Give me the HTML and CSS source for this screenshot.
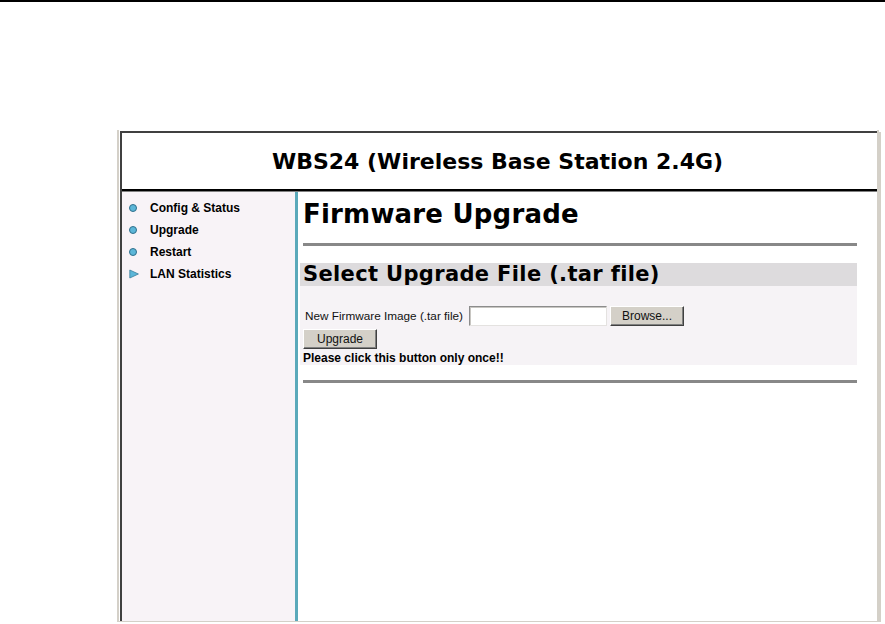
FILE: index.html
```html
<!DOCTYPE html>
<html>
<head>
<meta charset="utf-8">
<title>WBS24</title>
<link rel="stylesheet" href="styles.css">
</head>
<body>
<div class="topline"></div>
<div class="frame">
  <div class="win">
    <div class="header"><div class="title">WBS24 (Wireless Base Station 2.4G)</div></div>
    <div class="main">
      <nav class="side">
        <div class="item"><svg class="bul" viewBox="0 0 10 10"><circle cx="4" cy="5" r="3.5" fill="#5cb6d8" stroke="#2f6f8c" stroke-width="1"/></svg><span>Config &amp; Status</span></div>
        <div class="item"><svg class="bul" viewBox="0 0 10 10"><circle cx="4" cy="5" r="3.5" fill="#5cb6d8" stroke="#2f6f8c" stroke-width="1"/></svg><span>Upgrade</span></div>
        <div class="item"><svg class="bul" viewBox="0 0 10 10"><circle cx="4" cy="5" r="3.5" fill="#5cb6d8" stroke="#2f6f8c" stroke-width="1"/></svg><span>Restart</span></div>
        <div class="item"><svg class="bul" viewBox="0 0 10 10"><polygon points="0.8,1 9.4,5 0.8,9" fill="#5cb6d8" stroke="#3a7f9c" stroke-width="0.8"/></svg><span>LAN Statistics</span></div>
      </nav>
      <div class="content">
        <h1 class="pagetitle">Firmware Upgrade</h1>
        <div class="rule"></div>
        <div class="section">
          <div class="bar">Select Upgrade File (.tar file)</div>
          <div class="sbody">
            <div class="filerow"><span class="label">New Firmware Image (.tar file)</span><span class="input"></span><span class="btn">Browse...</span></div>
            <div class="btnrow"><span class="btn">Upgrade</span></div>
            <div class="note">Please click this button only once!!</div>
          </div>
        </div>
        <div class="rule rule2"></div>
      </div>
    </div>
  </div>
</div>
</body>
</html>
```
FILE: styles.css
```css
html, body {
  margin: 0;
  padding: 0;
  background: #fff;
  overflow: hidden;
}
body {
  font-family: "Liberation Sans", Arial, sans-serif;
  color: #000;
}
.topline {
  height: 2px;
  background: #000;
}
.frame {
  margin: 128px 0 0 117px;
  width: 762px;
  height: 492px;
  box-sizing: border-box;
  border-left: 2px solid #d4d0c8;
  border-right: 2px solid #d4d0c8;
  border-bottom: 1px solid #d4d0c8;
  padding: 1px 0 0 1px;
  box-shadow: 2px 2px 0 #d4d0c8;
  display: flex;
}
.win {
  flex: 1;
  display: flex;
  flex-direction: column;
  border-top: 2px solid #404040;
  border-left: 2px solid #404040;
  min-width: 0;
}
.header {
  height: 56px;
  flex: none;
  border-bottom: 2px solid #000;
  display: flex;
  align-items: center;
  justify-content: center;
  background: #fff;
}
.title {
  font-family: "DejaVu Sans", Verdana, sans-serif;
  font-weight: bold;
  font-size: 22px;
  margin-right: 4px;
}
.main {
  flex: 1;
  display: flex;
  border-top: 1px solid #808080;
  min-height: 0;
}
.side {
  width: 173px;
  flex: none;
  background: #f8f3f7;
  border-right: 3px solid #5ba9ba;
  padding-top: 5px;
}
.item {
  display: flex;
  align-items: center;
  height: 22px;
  padding-left: 7px;
  font-size: 12px;
  font-weight: bold;
}
.bul {
  width: 10px;
  height: 10px;
  margin-right: 11px;
  flex: none;
}
.content {
  flex: 1;
  padding: 7px 20px 0 2px;
  background: #fff;
}
.pagetitle {
  margin: 0;
  padding-left: 3px;
  font-family: "DejaVu Sans", Verdana, sans-serif;
  font-weight: bold;
  font-size: 26px;
  line-height: 30px;
  letter-spacing: 0.2px;
}
.rule {
  margin: 14px 0 0 3px;
  height: 3px;
  background: #888;
}
.rule2 {
  margin-top: 15px;
}
.section {
  margin-top: 17px;
}
.bar {
  height: 23px;
  line-height: 23px;
  background: #dddbdd;
  padding-left: 3px;
  font-family: "DejaVu Sans", Verdana, sans-serif;
  font-weight: bold;
  font-size: 21px;
  letter-spacing: 0.35px;
  white-space: nowrap;
}
.sbody {
  background: #f6f3f6;
  padding-top: 20px;
}
.filerow {
  display: flex;
  align-items: center;
  height: 20px;
  padding-left: 5px;
}
.label {
  font-size: 11.75px;
  margin-right: 6px;
  color: #111;
  position: relative;
  top: -1px;
}
.input {
  width: 138px;
  height: 20px;
  box-sizing: border-box;
  background: #fff;
  border-top: 1px solid #8c8c8c;
  border-left: 1px solid #8c8c8c;
  border-right: 1px solid #e4e2e0;
  border-bottom: 1px solid #e4e2e0;
  box-shadow: inset 1px 1px 0 #c8c6c2;
  margin-right: 3px;
}
.btn {
  display: inline-flex;
  align-items: center;
  justify-content: center;
  width: 74px;
  height: 20px;
  box-sizing: border-box;
  background: #d4d0c8;
  border-top: 1px solid #fff;
  border-left: 1px solid #fff;
  border-right: 1px solid #404040;
  border-bottom: 1px solid #404040;
  box-shadow: inset -1px -1px 0 #808080;
  font-size: 12px;
  color: #111;
}
.btnrow {
  margin-top: 3px;
  padding-left: 3px;
  height: 20px;
}
.note {
  margin-top: 2px;
  padding-left: 3px;
  font-size: 12px;
  font-weight: bold;
  line-height: 14px;
}
```
